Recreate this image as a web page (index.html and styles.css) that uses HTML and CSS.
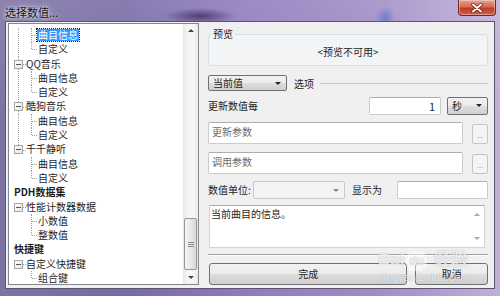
FILE: index.html
```html
<!DOCTYPE html>
<html lang="zh-CN">
<head>
    <meta charset="UTF-8">
    <title>选择数值...</title>
    <link rel="stylesheet" href="styles.css">
</head>
<body>

<div class="window">
    <div class="titlebar">
        <span class="title">选择数值...</span>
        <div class="close">
            <svg width="14" height="10" viewBox="0 0 14 10">
                <path d="M3 1.5 L11 8.5 M11 1.5 L3 8.5" stroke="#5a1a14" stroke-width="3.4" stroke-linecap="round"/>
                <path d="M3 1.5 L11 8.5 M11 1.5 L3 8.5" stroke="#fff" stroke-width="2" stroke-linecap="round"/>
            </svg>
        </div>
    </div>

    <div class="client">
        <div class="tree">
            <div class="nodes">
                <div class="row kid trunk"><span class="sel">曲目信息</span></div>
                <div class="row kid end trunk">自定义</div>
                <div class="row branch trunk"><span class="exp"></span>QQ音乐</div>
                <div class="row kid trunk">曲目信息</div>
                <div class="row kid end trunk">自定义</div>
                <div class="row branch trunk"><span class="exp"></span>酷狗音乐</div>
                <div class="row kid trunk">曲目信息</div>
                <div class="row kid end trunk">自定义</div>
                <div class="row branch trunk-end"><span class="exp"></span>千千静听</div>
                <div class="row kid">曲目信息</div>
                <div class="row kid end">自定义</div>
                <div class="row root">PDH数据集</div>
                <div class="row branch"><span class="exp"></span>性能计数器数据</div>
                <div class="row kid">小数值</div>
                <div class="row kid end">整数值</div>
                <div class="row root">快捷键</div>
                <div class="row branch"><span class="exp"></span>自定义快捷键</div>
                <div class="row kid end">组合键</div>
            </div>
            <div class="vscroll">
                <div class="arrow up"></div>
                <div class="track"><div class="thumb"><span class="grip"></span></div></div>
                <div class="arrow down"></div>
            </div>
        </div>

        <div class="panel">
            <fieldset class="group">
                <legend>预览</legend>
                <div class="preview-text">&lt;预览不可用&gt;</div>
            </fieldset>

            <div class="line-row">
                <div class="combo btn-face mode">当前值<span class="caret"></span></div>
                <span class="section">选项</span>
                <span class="rule"></span>
            </div>

            <div class="line-row interval">
                <span class="label">更新数值每</span>
                <div class="edit number">1</div>
                <div class="combo btn-face unit">秒<span class="caret"></span></div>
            </div>

            <div class="param-row">
                <div class="edit param">更新参数</div>
                <div class="dots">...</div>
            </div>
            <div class="param-row">
                <div class="edit param">调用参数</div>
                <div class="dots">...</div>
            </div>

            <div class="line-row units">
                <span class="label">数值单位:</span>
                <div class="combo disabled"><span class="caret"></span></div>
                <span class="label show">显示为</span>
                <div class="edit show-as"></div>
            </div>

            <div class="memo">
                <div class="memo-text">当前曲目的信息。</div>
                <div class="memo-bar">
                    <span class="tri up"></span>
                    <span class="tri down"></span>
                </div>
            </div>

            <div class="separator"></div>

            <div class="buttons">
                <div class="btn-face push ok">完成</div>
                <div class="btn-face push cancel">取消</div>
            </div>
        </div>
    </div>

    <div class="watermark">
        <div class="wm-big">Bai<span class="paw">du</span> 经验</div>
        <div class="wm-small">jingyan.baidu.com</div>
    </div>
</div>

</body>
</html>
```

FILE: styles.css
```css
* {
    box-sizing: border-box;
}
body {
    margin: 0;
    width: 500px;
    height: 296px;
    overflow: hidden;
    font-family: "Noto Sans CJK SC", "Noto Sans", sans-serif;
    font-size: 10px;
    color: #1e1e1e;
}
.window {
    position: relative;
    width: 500px;
    height: 296px;
    padding: 0 5px;
    background:
        radial-gradient(ellipse 36px 8px at 200px 16px, rgba(60, 40, 90, 0.75), transparent),
        radial-gradient(ellipse 10px 12px at 385px 18px, rgba(80, 100, 200, 0.6), transparent),
        linear-gradient(to bottom, rgba(255, 255, 255, 0.12), rgba(255, 255, 255, 0) 40%),
        linear-gradient(to right, #7d73a2 0%, #776aa6 25%, #8f7cbc 50%, #9f8cc6 75%, #c0b0d8 100%);
}
.titlebar {
    display: flex;
    justify-content: space-between;
    align-items: flex-start;
    height: 21px;
}
.title {
    margin-top: 6px;
    font-size: 11px;
    line-height: 12px;
    color: #111;
    text-shadow: 0 0 6px rgba(255, 255, 255, 0.9), 0 0 3px rgba(255, 255, 255, 0.8);
}
.close {
    width: 38px;
    height: 16px;
    margin-top: 0;
    margin-right: -1px;
    display: flex;
    align-items: center;
    justify-content: center;
    border: 1px solid #6e2a22;
    border-top: none;
    border-radius: 0 0 4px 4px;
    background: linear-gradient(to bottom, #e8a194 0%, #d66a55 45%, #c03b24 55%, #d0604a 100%);
    box-shadow: inset 0 0 0 1px rgba(255, 255, 255, 0.35);
}

/* client area */
.client {
    display: flex;
    height: 268px;
    background: #f0f0f0;
    border: 1px solid #5c5470;
    padding: 1px 2px 3px 2px;
}
.tree {
    display: flex;
    width: 191px;
    background: #fff;
    border: 1px solid #828790;
    overflow: hidden;
}
.nodes {
    flex: 1;
    padding-top: 4px;
}
.row {
    position: relative;
    height: 14.3px;
    line-height: 14.3px;
    padding-left: 29px;
    white-space: nowrap;
}
.row.kid::before {
    content: '';
    position: absolute;
    left: 22px;
    top: 0;
    height: 100%;
    border-left: 1px dotted #a0a0a0;
}
.row.kid.end::before {
    height: 50%;
}
.row.kid::after {
    content: '';
    position: absolute;
    left: 23px;
    top: 50%;
    width: 5px;
    border-top: 1px dotted #a0a0a0;
}
.row.trunk {
    background: repeating-linear-gradient(to bottom, #a0a0a0 0 1px, transparent 1px 2px) 9px 0 / 1px 100% no-repeat;
}
.row.trunk-end {
    background: repeating-linear-gradient(to bottom, #a0a0a0 0 1px, transparent 1px 2px) 9px 0 / 1px 50% no-repeat;
}
.row.branch {
    padding-left: 17px;
}
.row.branch::after {
    content: '';
    position: absolute;
    left: 14px;
    top: 50%;
    width: 3px;
    border-top: 1px dotted #a0a0a0;
}
.exp {
    position: absolute;
    left: 5px;
    top: 3px;
    width: 9px;
    height: 9px;
    border: 1px solid #a6a6a6;
    background: linear-gradient(to bottom right, #fff, #e6e6e6);
    z-index: 1;
}
.exp::after {
    content: '';
    position: absolute;
    left: 1px;
    top: 3px;
    width: 5px;
    border-top: 1px solid #555;
}
.row.root {
    padding-left: 5px;
    font-weight: bold;
}
.sel {
    display: inline-block;
    margin-left: -1px;
    padding: 0 1px;
    line-height: 12px;
    background: #3399ff;
    color: #fff;
    outline: 1px dotted #1a1a1a;
}

/* scrollbar */
.vscroll {
    display: flex;
    flex-direction: column;
    width: 15px;
    background: linear-gradient(to right, #e6e6e6, #f5f5f5 30%, #f5f5f5 70%, #e9e9e9);
}
.arrow {
    height: 15px;
    position: relative;
}
.arrow::after {
    content: '';
    position: absolute;
    left: 5px;
    border-left: 3px solid transparent;
    border-right: 3px solid transparent;
}
.arrow.up::after {
    top: 5px;
    border-bottom: 3px solid #444;
}
.arrow.down::after {
    top: 6px;
    border-top: 3px solid #444;
}
.track {
    flex: 1;
    padding-top: 180px;
}
.thumb {
    height: 52px;
    margin: 0 1px;
    border: 1px solid #979797;
    border-radius: 2px;
    background: linear-gradient(to right, #f4f4f4, #e8e8e8 50%, #d8d8d8);
    display: flex;
    align-items: center;
    justify-content: center;
}
.grip {
    width: 6px;
    height: 5px;
    border-top: 1px solid #8a8a8a;
    border-bottom: 1px solid #8a8a8a;
    position: relative;
}
.grip::after {
    content: '';
    position: absolute;
    left: 0;
    top: 1px;
    width: 6px;
    border-top: 1px solid #8a8a8a;
}

/* right panel */
.panel {
    width: 280px;
    margin-left: 9px;
    display: flex;
    flex-direction: column;
}
.group {
    margin: 6px 0 0;
    padding: 0;
    border: 1px solid #d5dfe5;
    border-radius: 3px;
    background: #f3f4f5;
    height: 37px;
}
.group legend {
    margin-left: 2px;
    padding: 0 2px;
    font-size: 10px;
    line-height: 10px;
}
.preview-text {
    text-align: center;
    line-height: 10px;
    padding-top: 8px;
}
.line-row {
    display: flex;
    align-items: center;
    margin-top: 9px;
    height: 16px;
}
.btn-face {
    border: 1px solid #707070;
    border-radius: 2px;
    background: linear-gradient(to bottom, #f2f2f2 0%, #ebebeb 48%, #dddddd 52%, #cfcfcf 100%);
}
.combo {
    position: relative;
    height: 16px;
    line-height: 14px;
    padding-left: 4px;
}
.caret {
    position: absolute;
    right: 5px;
    top: 6px;
    border-left: 3px solid transparent;
    border-right: 3px solid transparent;
    border-top: 3px solid #222;
}
.mode {
    width: 79px;
}
.section {
    margin-left: 7px;
}
.rule {
    flex: 1;
    margin-left: 6px;
    border-top: 1px solid #c4c4c4;
}
.interval {
    margin-top: 6px;
    height: 18px;
}
.label {
    line-height: 14px;
}
.edit {
    background: #fff;
    border: 1px solid #c8cbd0;
    border-top-color: #abadb3;
    border-radius: 2px;
}
.number {
    width: 72px;
    height: 18px;
    margin-left: auto;
    padding-right: 5px;
    text-align: right;
    font-size: 11px;
    line-height: 16px;
}
.unit {
    width: 41px;
    height: 18px;
    line-height: 16px;
    margin-left: 6px;
}
.param-row {
    display: flex;
    align-items: flex-end;
    margin-top: 7px;
    height: 22px;
}
.param-row + .param-row {
    margin-top: 8px;
}
.param {
    width: 255px;
    height: 22px;
    padding: 2px 3px;
    line-height: 14px;
    color: #6d6d6d;
}
.dots {
    width: 16px;
    height: 20px;
    margin-left: 9px;
    border: 1px solid #c5c5c5;
    border-radius: 2px;
    background: #f4f4f4;
    color: #9a9a9a;
    font-size: 7px;
    line-height: 20px;
    text-align: center;
}
.units {
    margin-top: 7px;
    height: 18px;
}
.units .label {
    width: 47px;
}
.combo.disabled {
    width: 96px;
    height: 18px;
    border: 1px solid #c9c9c9;
    border-radius: 2px;
    background: #f4f4f4;
}
.combo.disabled .caret {
    top: 7px;
    border-top-color: #8a8a8a;
}
.show {
    width: 36px;
    margin-left: 7px;
}
.show-as {
    width: 95px;
    height: 18px;
}
.memo {
    display: flex;
    width: 276px;
    height: 43px;
    margin-top: 6px;
    margin-left: 1px;
    background: #fff;
    border: 1px solid #d0d3d8;
    border-top-color: #abadb3;
}
.memo-text {
    flex: 1;
    padding: 2px 1px;
    line-height: 12px;
}
.memo-bar {
    width: 14px;
    display: flex;
    flex-direction: column;
    justify-content: space-between;
    align-items: center;
    padding: 7px 0 7px;
}
.tri {
    border-left: 3px solid transparent;
    border-right: 3px solid transparent;
}
.tri.up {
    border-bottom: 3px solid #a8a8a8;
}
.tri.down {
    border-top: 3px solid #a8a8a8;
}
.separator {
    margin-top: 6px;
    height: 2px;
    border-top: 1px solid #a0a0a0;
    border-bottom: 1px solid #fff;
}
.buttons {
    display: flex;
    margin-top: 7px;
    margin-left: 1px;
}
.push {
    height: 22px;
    line-height: 20px;
    text-align: center;
    border-radius: 3px;
}
.ok {
    width: 199px;
}
.cancel {
    width: 73px;
    margin-left: 8px;
}

/* watermark over the dialog */
.watermark {
    position: absolute;
    left: 378px;
    top: 250px;
    color: rgba(255, 255, 255, 0.75);
    text-shadow: 0 0 1px rgba(120, 120, 120, 0.6);
    pointer-events: none;
}
.wm-big {
    font-family: "Liberation Sans", sans-serif;
    font-weight: bold;
    font-size: 17px;
    line-height: 20px;
}
.paw {
    display: inline-block;
    margin: 0 2px;
    padding: 0 3px;
    font-size: 12px;
    border-radius: 8px;
    background: rgba(255, 255, 255, 0.45);
}
.wm-small {
    font-family: "Liberation Sans", sans-serif;
    font-size: 11px;
    line-height: 12px;
    margin-left: 3px;
}
```
